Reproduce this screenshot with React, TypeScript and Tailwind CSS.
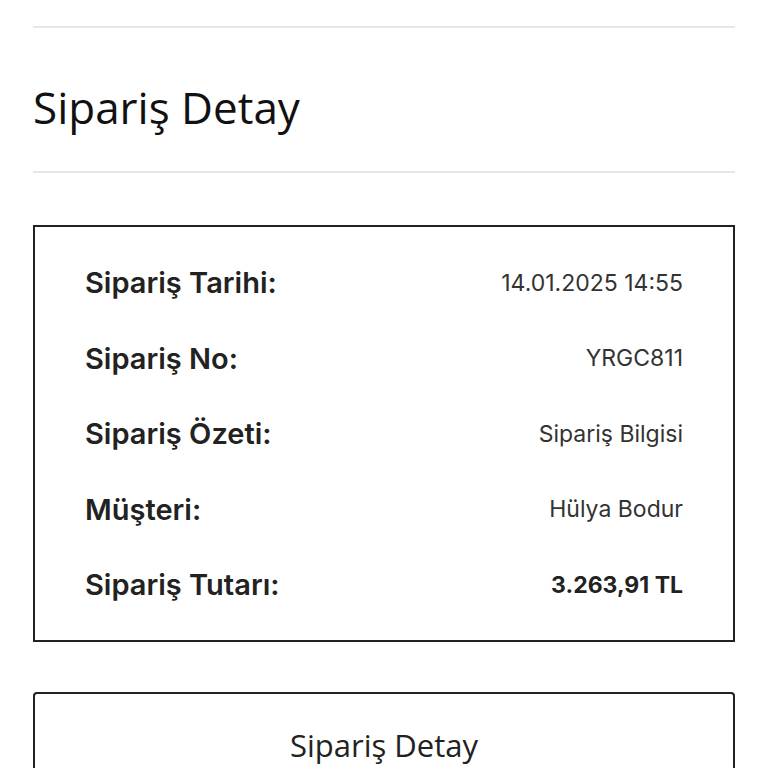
export default function App() {
  const rows = [
    { label: "Sipariş Tarihi:", value: "14.01.2025 14:55", bold: false },
    { label: "Sipariş No:", value: "YRGC811", bold: false },
    { label: "Sipariş Özeti:", value: "Sipariş Bilgisi", bold: false },
    { label: "Müşteri:", value: "Hülya Bodur", bold: false },
    { label: "Sipariş Tutarı:", value: "3.263,91 TL", bold: true },
  ];
  return (
    <div className="min-h-[768px] bg-white px-[33px] pt-[26px]" style={{ fontFamily: '"Open Sans", sans-serif' }}>
      <div className="h-[2px] bg-[#e6e6e6]" />
      <div className="flex h-[143px] items-center pt-[14px]">
        <h1 className="text-[44px] leading-none text-[#111]">Sipariş Detay</h1>
      </div>
      <div className="h-[2px] bg-[#e6e6e6]" />
      <div className="mt-[52px] border-2 border-[#222] px-[50px] pt-[18px] pb-[17px]" style={{ fontFamily: 'Inter, sans-serif' }}>
        {rows.map((r) => (
          <div key={r.label} className="flex h-[75.5px] items-center justify-between">
            <span className="text-[29px] font-semibold text-[#222]">{r.label}</span>
            <span className={r.bold ? "text-[23px] font-bold text-[#222]" : "text-[23px] text-[#333]"}>{r.value}</span>
          </div>
        ))}
      </div>
      <div className="mt-[50px] flex h-[120px] justify-center rounded-[4px] border-2 border-[#222] pt-[36px]">
        <span className="text-[31px] leading-none text-[#222]">Sipariş Detay</span>
      </div>
    </div>
  );
}
